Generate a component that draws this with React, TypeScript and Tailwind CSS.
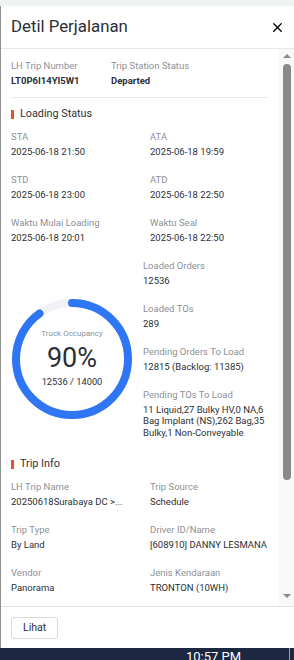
import { X } from "lucide-react";

type Field = { label: string; value: string };

const loadingTimes: Field[] = [
  { label: "STA", value: "2025-06-18 21:50" },
  { label: "ATA", value: "2025-06-18 19:59" },
  { label: "STD", value: "2025-06-18 23:00" },
  { label: "ATD", value: "2025-06-18 22:50" },
  { label: "Waktu Mulai Loading", value: "2025-06-18 20:01" },
  { label: "Waktu Seal", value: "2025-06-18 22:50" },
];

const loadCounts: Field[] = [
  { label: "Loaded Orders", value: "12536" },
  { label: "Loaded TOs", value: "289" },
  { label: "Pending Orders To Load", value: "12815 (Backlog: 11385)" },
  {
    label: "Pending TOs To Load",
    value: "11 Liquid,27 Bulky HV,0 NA,6 Bag Implant (NS),262 Bag,35 Bulky,1 Non-Conveyable",
  },
];

const tripInfo: Field[] = [
  { label: "LH Trip Name", value: "20250618Surabaya DC >..." },
  { label: "Trip Source", value: "Schedule" },
  { label: "Trip Type", value: "By Land" },
  { label: "Driver ID/Name", value: "[608910] DANNY LESMANA" },
  { label: "Vendor", value: "Panorama" },
  { label: "Jenis Kendaraan", value: "TRONTON (10WH)" },
];

function InfoField({ label, value }: Field) {
  return (
    <div>
      <div className="text-[9.5px] leading-[14px] text-[#8c9099] mb-[2px] whitespace-nowrap">{label}</div>
      <div className="text-[9.5px] leading-[11.5px] text-[#2b2f36]">{value}</div>
    </div>
  );
}

function SectionTitle({ children }: { children: string }) {
  return (
    <div className="flex items-center gap-[6px] h-[18px]">
      <span className="w-[3px] h-[9px] bg-[#e8502f]" />
      <span className="text-[10.8px] text-[#2b2f36]">{children}</span>
    </div>
  );
}

// donut gauge for truck occupancy
function Occupancy({ percent }: { percent: number }) {
  const r = 56;
  const c = 2 * Math.PI * r;
  return (
    <div className="relative w-[122px] h-[122px]">
      <svg width="122" height="122" viewBox="0 0 122 122" className="-rotate-90">
        <circle cx="61" cy="61" r={r} fill="none" stroke="#f0f2f7" strokeWidth="8" />
        <circle
          cx="61"
          cy="61"
          r={r}
          fill="none"
          stroke="#2f76f5"
          strokeWidth="8"
          strokeLinecap="round"
          strokeDasharray={`${(c * percent) / 100} ${c}`}
        />
      </svg>
      <div className="absolute inset-0 flex flex-col items-center justify-center">
        <div className="text-[8px] text-[#8c9099] leading-[10px]">Truck Occupancy</div>
        <div className="text-[27px] leading-[32px] text-[#2b2f36] mt-[3px]">{percent}%</div>
        <div className="text-[9.3px] leading-[12px] text-[#2b2f36] mt-[2px]">12536 / 14000</div>
      </div>
    </div>
  );
}

function ScrollTrack() {
  return (
    <div className="w-[15px] bg-[#f8f8f8] flex flex-col items-center pt-[5px] pb-[8px]">
      <div className="w-0 h-0 border-l-[4px] border-r-[4px] border-b-[4px] border-l-transparent border-r-transparent border-b-[#8a8a8a]" />
      <div className="w-[8px] h-[416px] mt-[6px] rounded-[4px] bg-[#8a8a8a]" />
      <div className="flex-1" />
      <div className="w-0 h-0 border-l-[4px] border-r-[4px] border-t-[4px] border-l-transparent border-r-transparent border-t-[#8a8a8a]" />
    </div>
  );
}

export default function App() {
  return (
    <div className="w-[294px] h-[660px] flex flex-col bg-white overflow-hidden" style={{ fontFamily: "Roboto, 'Noto Sans', sans-serif" }}>
      <div className="h-[6px] bg-[#eef4f2] shrink-0" />
      <div className="flex-1 flex flex-col border-l border-[#8f8f8f] min-h-0">
        {/* Header */}
        <div className="h-[43px] shrink-0 flex items-center justify-between pl-[10px] pr-[9px] border-b border-[#e4e7ee]">
          <h1 className="text-[16.8px] text-[#2b2f36]">Detil Perjalanan</h1>
          <X className="w-[15px] h-[15px] text-black" strokeWidth={2.2} />
        </div>

        {/* Body */}
        <div className="flex-1 flex min-h-0">
          <div className="flex-1 overflow-hidden pl-[10px] pr-[11px]">
            <div className="flex pt-[10px] pb-[10px] border-b border-[#e8e8e8]">
              <div className="w-[100px]">
                <div className="text-[9.5px] leading-[14px] text-[#8c9099] mb-[2px]">LH Trip Number</div>
                <div className="text-[9.5px] leading-[12px] font-bold text-[#2b2f36]">LT0P6I14YI5W1</div>
              </div>
              <div>
                <div className="text-[9.5px] leading-[14px] text-[#8c9099] mb-[2px]">Trip Station Status</div>
                <div className="text-[9.5px] leading-[12px] font-bold text-[#2b2f36]">Departed</div>
              </div>
            </div>

            <div className="pt-[7px]">
              <SectionTitle>Loading Status</SectionTitle>
              <div className="grid grid-cols-[139px_1fr] gap-y-[15.5px] mt-[7px]">
                {loadingTimes.map((f) => (
                  <InfoField key={f.label} {...f} />
                ))}
              </div>
              <div className="grid grid-cols-[132px_1fr] mt-[15px]">
                <div className="pt-[39px]">
                  <Occupancy percent={90} />
                </div>
                <div className="flex flex-col gap-[15.5px]">
                  {loadCounts.map((f) => (
                    <InfoField key={f.label} {...f} />
                  ))}
                </div>
              </div>
            </div>

            <div className="pt-[17px]">
              <SectionTitle>Trip Info</SectionTitle>
              <div className="grid grid-cols-[139px_1fr] gap-y-[15.5px] mt-[7px]">
                {tripInfo.map((f) => (
                  <InfoField key={f.label} {...f} />
                ))}
              </div>
            </div>
          </div>
          <ScrollTrack />
        </div>

        {/* Footer */}
        <div className="h-[42px] shrink-0 border-t border-[#e4e4e4] flex items-center pl-[10px]">
          <button className="h-[22px] px-[11px] border border-[#dadada] rounded-[3px] text-[10.5px] text-[#2b2f36] bg-white">
            Lihat
          </button>
        </div>
      </div>

      {/* Taskbar */}
      <div className="h-[12px] shrink-0 bg-[#1c2741] relative overflow-hidden">
        <span className="absolute left-[186px] top-[2px] text-[13px] leading-[14px] text-white">10:57 PM</span>
        <span className="absolute left-[289px] top-0 w-px h-full bg-[#9aa0aa]" />
      </div>
    </div>
  );
}
